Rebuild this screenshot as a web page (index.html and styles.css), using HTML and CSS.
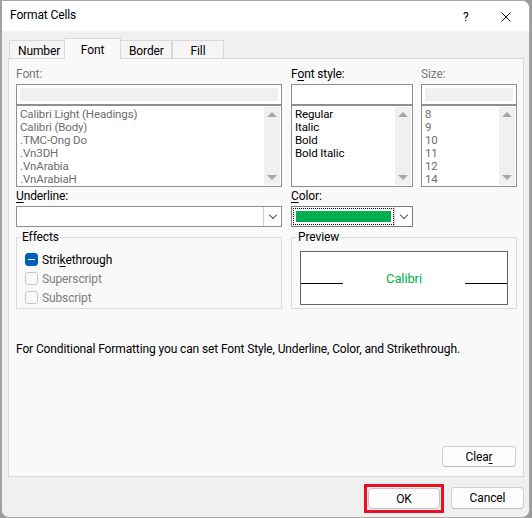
FILE: index.html
```html
<!DOCTYPE html>
<html lang="en">
<head>
    <meta charset="UTF-8">
    <title>Format Cells</title>
    <link rel="stylesheet" href="styles.css">
</head>
<body>

    <div class="window">
        <!-- Title bar -->
        <div class="titlebar">
            <span class="title">Format Cells</span>
            <span class="help">?</span>
            <span class="close">
                <svg width="10" height="10" viewBox="0 0 10 10"><path d="M0.5 0.5 L9.5 9.5 M9.5 0.5 L0.5 9.5" stroke="#1a1a1a" stroke-width="1" fill="none"/></svg>
            </span>
        </div>

        <div class="client">
            <!-- Tabs -->
            <div class="tabs">
                <div class="tab">Number</div>
                <div class="tab active">Font</div>
                <div class="tab">Border</div>
                <div class="tab">Fill</div>
            </div>

            <div class="panel">
                <div class="grid">
                    <!-- Font -->
                    <div class="field">
                        <div class="label disabled">Font:</div>
                        <div class="textbox"><div class="gray-fill"></div></div>
                        <div class="listbox">
                            <ul class="items disabled">
                                <li>Calibri Light (Headings)</li>
                                <li>Calibri (Body)</li>
                                <li>.TMC-Ong Do</li>
                                <li>.Vn3DH</li>
                                <li>.VnArabia</li>
                                <li>.VnArabiaH</li>
                            </ul>
                            <div class="scrollbar"><span class="arrow up"></span><span class="arrow down"></span></div>
                        </div>
                    </div>

                    <!-- Font style -->
                    <div class="field">
                        <div class="label">F<u>o</u>nt style:</div>
                        <div class="textbox"></div>
                        <div class="listbox">
                            <ul class="items">
                                <li>Regular</li>
                                <li>Italic</li>
                                <li>Bold</li>
                                <li>Bold Italic</li>
                            </ul>
                            <div class="scrollbar"><span class="arrow up"></span><span class="arrow down"></span></div>
                        </div>
                    </div>

                    <!-- Size -->
                    <div class="field size">
                        <div class="label disabled">Size:</div>
                        <div class="textbox"><div class="gray-fill"></div></div>
                        <div class="listbox">
                            <ul class="items disabled">
                                <li>8</li>
                                <li>9</li>
                                <li>10</li>
                                <li>11</li>
                                <li>12</li>
                                <li>14</li>
                            </ul>
                            <div class="scrollbar"><span class="arrow up"></span><span class="arrow down"></span></div>
                        </div>
                    </div>

                    <!-- Underline -->
                    <div class="field row2 col1">
                        <div class="label"><u>U</u>nderline:</div>
                        <div class="combo">
                            <div class="combo-value"></div>
                            <div class="drop"><span class="chevron"></span></div>
                        </div>
                    </div>

                    <!-- Color -->
                    <div class="field row2 col2">
                        <div class="label"><u>C</u>olor:</div>
                        <div class="combo focused">
                            <div class="combo-value"><div class="focus-rect"><div class="swatch"></div></div></div>
                            <div class="drop"><span class="chevron"></span></div>
                        </div>
                    </div>

                    <!-- Effects -->
                    <div class="group effects">
                        <div class="legend">Effects</div>
                        <div class="check first">
                            <span class="box checked"></span>
                            <span>Stri<u>k</u>ethrough</span>
                        </div>
                        <div class="check disabled">
                            <span class="box"></span>
                            <span>Superscript</span>
                        </div>
                        <div class="check disabled">
                            <span class="box"></span>
                            <span>Subscript</span>
                        </div>
                    </div>

                    <!-- Preview -->
                    <div class="group preview">
                        <div class="legend">Preview</div>
                        <div class="preview-box">
                            <div class="base-line"></div>
                            <div class="sample">Calibri</div>
                            <div class="base-line"></div>
                        </div>
                    </div>
                </div>

                <p class="note">For Conditional Formatting you can set Font Style, Underline, Color, and Strikethrough.</p>

                <div class="clear-row">
                    <button class="button clear">Clea<u>r</u></button>
                </div>
            </div>

            <!-- Dialog buttons -->
            <div class="actions">
                <div class="ok-frame">
                    <button class="button ok">OK</button>
                </div>
                <button class="button cancel">Cancel</button>
            </div>
        </div>
    </div>

</body>
</html>
```

FILE: styles.css
```css
body {
    margin: 0;
    padding: 0;
    background-color: #9c9c9c;
    font-family: Roboto, "Liberation Sans", sans-serif;
    font-size: 12px;
    letter-spacing: -0.12px;
    color: #000;
}
ul {
    margin: 0;
    padding: 0;
    list-style: none;
}
u {
    text-decoration-thickness: 1px;
    text-underline-offset: 2px;
}
.window {
    box-sizing: border-box;
    width: 529px;
    height: 518px;
    margin-left: 1px;
    background-color: #f0f0f0;
    border: 1px solid #a8a8a8;
    border-radius: 0 8px 8px 8px;
    overflow: hidden;
}
.titlebar {
    display: flex;
    align-items: center;
    height: 30px;
    background-color: #fff;
    padding-left: 8px;
}
.title {
    flex: 1;
    line-height: 15px;
    padding-bottom: 1px;
}
.help {
    width: 12px;
    margin-right: 26px;
    line-height: 15px;
    padding-top: 3px;
}
.close {
    display: flex;
    width: 10px;
    height: 10px;
    margin-right: 18px;
    padding-top: 1px;
}
.client {
    padding: 7px 5px 0 6px;
}

/* Tabs */
.tabs {
    display: flex;
    align-items: flex-end;
    height: 20px;
    margin-left: 1px;
}
.tab {
    box-sizing: border-box;
    height: 18px;
    padding: 2px 8px 0;
    line-height: 16px;
    text-align: center;
    background-color: #f5f5f5;
    border: 1px solid #d9d9d9;
    border-bottom: none;
}
.tab:nth-child(1) { width: 56px; }
.tab:nth-child(3) { width: 52px; }
.tab:nth-child(4) { width: 52px; }
.tab.active {
    width: 57px;
    height: 21px;
    padding-top: 3px;
    background-color: #f9f9f9;
    margin: 0 -1px -1px -1px;
    position: relative;
    z-index: 1;
}
.panel {
    box-sizing: border-box;
    display: flex;
    flex-direction: column;
    height: 419px;
    padding: 8px 7px 9px 7px;
    background-color: #f9f9f9;
    border: 1px solid #d9d9d9;
}
.grid {
    display: grid;
    grid-template-columns: 266px 122px 95px;
    column-gap: 9px;
}
.grid > .size {
    margin-left: -1px;
}
.col1 { grid-column: 1; }
.col2 { grid-column: 2; }
.field .label {
    height: 17px;
    line-height: 15px;
}
.label.disabled {
    color: #7a7a7a;
}
.row2 {
    margin-top: 2px;
}
.textbox {
    box-sizing: border-box;
    height: 21px;
    padding: 3px;
    background-color: #fff;
    border: 1px solid #8f8f8f;
}
.gray-fill {
    height: 13px;
    background-color: #f0f0f0;
}
.listbox {
    box-sizing: border-box;
    display: flex;
    height: 82px;
    background-color: #fff;
    border: 1px solid #8f8f8f;
}
.items {
    flex: 1;
    padding: 2px 0 0 3px;
    font-size: 11.5px;
    line-height: 13px;
    overflow: hidden;
}
.items.disabled {
    color: #6d6d6d;
}
.scrollbar {
    display: flex;
    flex-direction: column;
    justify-content: space-between;
    align-items: center;
    width: 16px;
    margin: 1px 1px 1px 0;
    padding: 5px 0;
    background-color: #f0f0f0;
}
.arrow {
    width: 0;
    height: 0;
    border-left: 5px solid transparent;
    border-right: 5px solid transparent;
}
.arrow.up {
    border-bottom: 5px solid #a6a6a6;
}
.arrow.down {
    border-top: 5px solid #a6a6a6;
}

/* Combos */
.combo {
    box-sizing: border-box;
    display: flex;
    height: 21px;
    background-color: #fff;
    border: 1px solid #8f8f8f;
}
.combo-value {
    flex: 1;
}
.drop {
    display: flex;
    align-items: center;
    justify-content: center;
    width: 17px;
    border-left: 1px solid #cfcfcf;
}
.chevron {
    width: 5px;
    height: 5px;
    border-right: 1px solid #555;
    border-bottom: 1px solid #555;
    transform: rotate(45deg);
    margin-top: -4px;
}
.combo.focused {
    border-color: #7a7a7a;
}
.focus-rect {
    box-sizing: border-box;
    height: 17px;
    margin: 1px 0 0 1px;
    padding: 2px;
    border: 1px dotted #000;
}
.swatch {
    height: 11px;
    background-color: #00b050;
}

/* Group boxes */
.group {
    box-sizing: border-box;
    height: 72px;
    margin-top: 10px;
    border: 1px solid #dcdcdc;
}
.legend {
    width: max-content;
    margin: -8px 0 0 4px;
    padding: 0 1px;
    line-height: 15px;
    background-color: #f9f9f9;
}
.effects {
    grid-column: 1;
    padding-left: 8px;
}
.effects .legend {
    margin-left: -4px;
}
.check {
    display: flex;
    align-items: center;
    height: 19px;
}
.check.first {
    margin-top: 5px;
}
.check.disabled {
    color: #7d7d7d;
}
.box {
    box-sizing: border-box;
    flex-shrink: 0;
    display: flex;
    align-items: center;
    justify-content: center;
    width: 13px;
    height: 13px;
    margin-right: 4px;
    border: 1px solid #c6c6c6;
    border-radius: 3px;
    background-color: #f9f9f9;
}
.box.checked {
    background-color: #005fb8;
    border-color: #005fb8;
}
.box.checked::after {
    content: "";
    width: 7px;
    height: 1px;
    background-color: #fff;
}
.preview {
    grid-column: 2 / 4;
    padding: 0 8px;
}
.preview .legend {
    margin-left: -3px;
}
.preview-box {
    box-sizing: border-box;
    display: flex;
    height: 54px;
    margin-top: 6px;
    padding-top: 19px;
    background-color: #fff;
    border: 1px solid #646464;
}
.base-line {
    width: 42px;
    height: 1px;
    margin-top: 12px;
    background-color: #000;
}
.sample {
    flex: 1;
    text-align: center;
    font-size: 13px;
    line-height: 16px;
    color: #00b050;
}

.note {
    margin: 33px 0 0 0;
    line-height: 15px;
}
.clear-row {
    display: flex;
    justify-content: flex-end;
    margin-top: auto;
}

/* Buttons */
.button {
    box-sizing: border-box;
    width: 73px;
    height: 22px;
    padding: 0;
    font-family: Roboto, "Liberation Sans", sans-serif;
    font-size: 12px;
    letter-spacing: -0.12px;
    color: #000;
    background-color: #fdfdfd;
    border: 1px solid #d0d0d0;
    border-bottom-color: #bcbcbc;
    border-radius: 4px;
}
.button.clear {
    width: 74px;
    height: 21px;
}
.actions {
    display: flex;
    justify-content: flex-end;
    align-items: flex-start;
    gap: 7px;
    margin-top: 7px;
}
.ok-frame {
    display: flex;
    padding: 1px;
    border: 3px solid #e81123;
}
.button.ok {
    width: 72px;
    height: 21px;
    border-color: #c4c4c4;
}
.button.cancel {
    margin-top: 3px;
}
```
